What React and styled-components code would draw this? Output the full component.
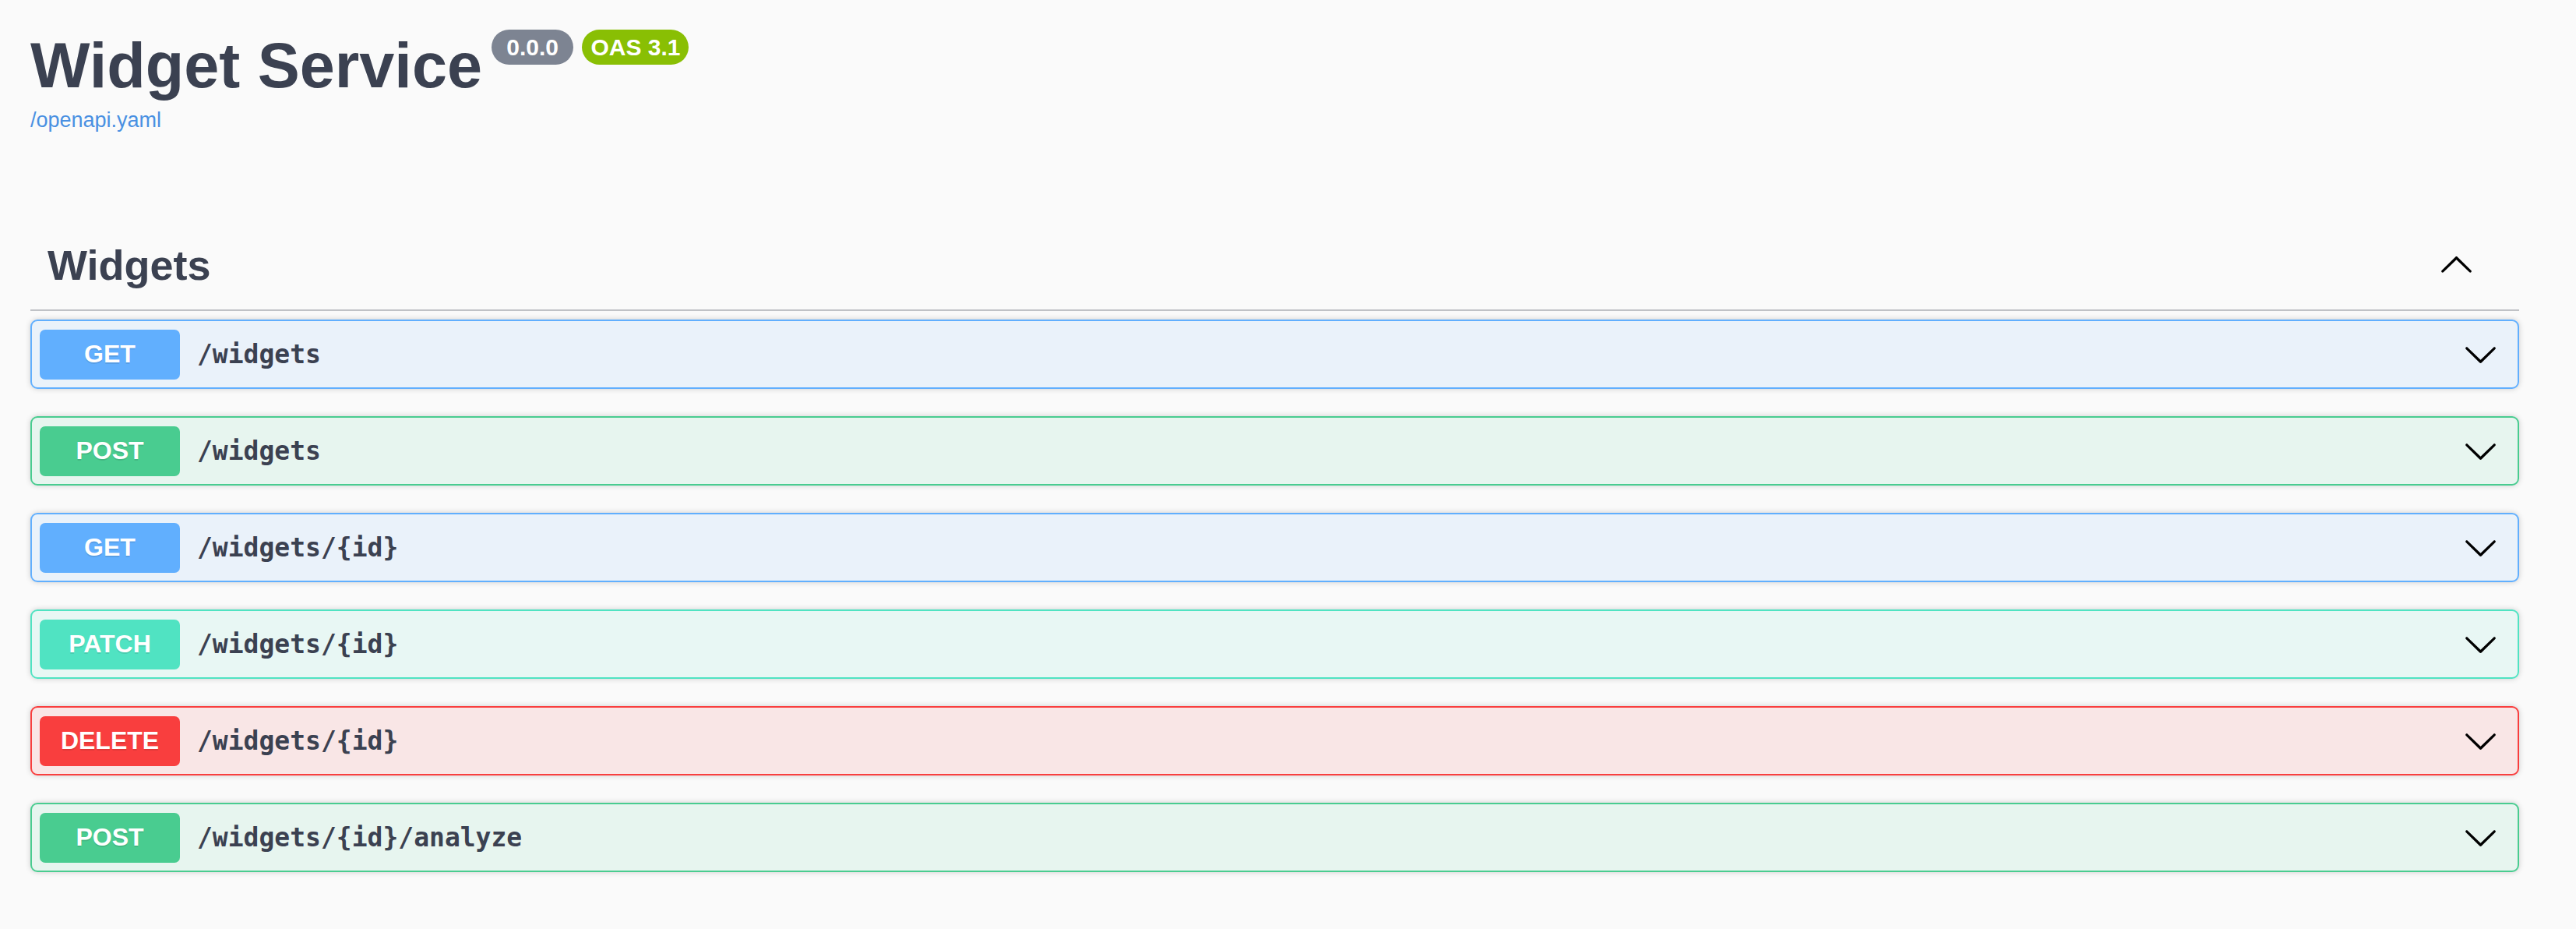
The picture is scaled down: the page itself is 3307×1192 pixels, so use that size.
import React from 'react';
import styled, { createGlobalStyle } from 'styled-components';

const operations = [
    { method: 'get', path: '/widgets' },
    { method: 'post', path: '/widgets' },
    { method: 'get', path: '/widgets/{id}' },
    { method: 'patch', path: '/widgets/{id}' },
    { method: 'delete', path: '/widgets/{id}' },
    { method: 'post', path: '/widgets/{id}/analyze' },
];

const methodColors = {
    get: { main: '#61affe', bg: 'rgba(97, 175, 254, 0.1)' },
    post: { main: '#49cc90', bg: 'rgba(73, 204, 144, 0.1)' },
    patch: { main: '#50e3c2', bg: 'rgba(80, 227, 194, 0.1)' },
    delete: { main: '#f93e3e', bg: 'rgba(249, 62, 62, 0.1)' },
};

const Arrow = ({ up }) => (
    <ArrowSvg $up={up} viewBox="0 0 20 20" width="45" height="45" aria-hidden="true">
        <path d="M17.418 6.109c.272-.268.709-.268.979 0s.271.701 0 .969l-7.908 7.83c-.27.268-.707.268-.979 0l-7.908-7.83c-.27-.268-.27-.701 0-.969.271-.268.709-.268.979 0L10 13.25l7.418-7.141z" />
    </ArrowSvg>
);

const Operation = ({ method, path }) => (
    <OpBlock $method={method}>
        <MethodBadge $method={method}>{method.toUpperCase()}</MethodBadge>
        <OpPath>{path}</OpPath>
        <Arrow />
    </OpBlock>
);

const App = () => {
    return (
        <>
            <GlobalStyle />
            <Wrapper>
                <Info>
                    <Title>
                        <span>Widget Service</span>
                        <Stamps>
                            <Stamp $color="#7d8492"> 0.0.0 </Stamp>
                            <Stamp $color="#89bf04">OAS 3.1</Stamp>
                        </Stamps>
                    </Title>
                    <SpecLink href="#">/openapi.yaml</SpecLink>
                </Info>

                <TagSection>
                    <TagHeader>
                        <h3>Widgets</h3>
                        <Arrow up />
                    </TagHeader>
                    {operations.map((op, i) => (
                        <Operation key={i} method={op.method} path={op.path} />
                    ))}
                </TagSection>
            </Wrapper>
        </>
    );
};

export default App;

const GlobalStyle = createGlobalStyle`
    html, body {
        margin: 0;
        padding: 0;
        background: #fafafa;
    }
    body {
        font-family: "Liberation Sans", Arial, sans-serif;
        color: #3b4151;
    }
`;

const Wrapper = styled.div`
    box-sizing: border-box;
    width: 3307px;
    padding: 38px 73px 60px 39px;
`;

const Info = styled.div`
    display: flex;
    flex-direction: column;
    align-items: flex-start;
    margin-bottom: 119px;
`;

const Title = styled.h2`
    display: flex;
    align-items: flex-start;
    margin: 0;
    font-size: 81px;
    line-height: 92px;
    font-weight: 700;
    color: #3b4151;
`;

const Stamps = styled.div`
    display: flex;
    gap: 11px;
    margin-left: 12px;
`;

const Stamp = styled.small`
    display: inline-block;
    height: 45px;
    padding: 0 11px;
    border-radius: 128px;
    background-color: ${(p) => p.$color};
    color: #fff;
    font-family: "Liberation Sans", Arial, sans-serif;
    font-size: 30px;
    line-height: 45px;
    font-weight: 700;
    white-space: pre;
`;

const SpecLink = styled.a`
    margin-top: 9px;
    font-size: 27px;
    line-height: 30px;
    color: #4990e2;
    text-decoration: none;
`;

const TagSection = styled.div`
    display: flex;
    flex-direction: column;
`;

const TagHeader = styled.div`
    display: flex;
    align-items: center;
    padding: 20px 58px 24px 22px;
    margin-bottom: 11px;
    border-bottom: 2px solid rgba(59, 65, 81, 0.3);

    h3 {
        flex: 1;
        margin: 0;
        font-size: 54px;
        line-height: 65px;
        font-weight: 700;
        color: #3b4151;
    }
`;

const ArrowSvg = styled.svg`
    flex: none;
    fill: #000;
    transform: ${(p) => (p.$up ? 'rotate(180deg)' : 'none')};
`;

const OpBlock = styled.div`
    box-sizing: border-box;
    display: flex;
    align-items: center;
    height: 89px;
    margin-bottom: 35px;
    padding: 0 25px 0 10px;
    border: 2px solid ${(p) => methodColors[p.$method].main};
    border-radius: 9px;
    background: ${(p) => methodColors[p.$method].bg};
    box-shadow: 0 0 7px rgba(0, 0, 0, 0.19);
`;

const MethodBadge = styled.span`
    flex: none;
    box-sizing: border-box;
    width: 180px;
    height: 64px;
    display: flex;
    align-items: center;
    justify-content: center;
    border-radius: 7px;
    background: ${(p) => methodColors[p.$method].main};
    color: #fff;
    font-family: "Liberation Sans", Arial, sans-serif;
    font-size: 32px;
    font-weight: 700;
    text-shadow: 0 2px 0 rgba(0, 0, 0, 0.1);
`;

const OpPath = styled.span`
    flex: 1;
    padding: 0 22px;
    font-family: "DejaVu Sans Mono", "Liberation Mono", monospace;
    font-size: 33px;
    font-weight: 700;
    color: #3b4151;
`;
